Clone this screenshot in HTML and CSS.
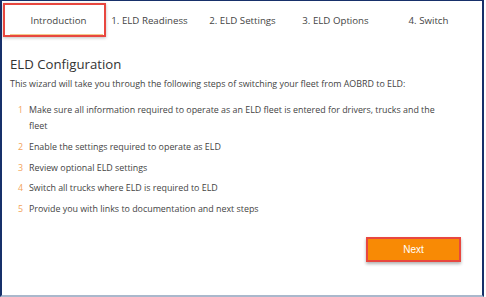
FILE: index.html
```html
<!DOCTYPE html>
<html lang="en">
<head>
    <meta charset="UTF-8">
    <meta name="viewport" content="width=device-width, initial-scale=1.0">
    <title>ELD Configuration</title>
    <link rel="stylesheet" href="styles.css">
</head>
<body>
    <div class="frame">
        <div class="tabs">
            <div class="tab active">Introduction</div>
            <div class="tab">1. ELD Readiness</div>
            <div class="tab">2. ELD Settings</div>
            <div class="tab">3. ELD Options</div>
            <div class="tab">4. Switch</div>
        </div>

        <div class="content">
            <h1>ELD Configuration</h1>
            <p class="intro">This wizard will take you through the following steps of switching your fleet from AOBRD to ELD:</p>

            <ol class="steps">
                <li><span class="num">1</span><span>Make sure all information required to operate as an ELD fleet is entered for drivers, trucks and the fleet</span></li>
                <li><span class="num">2</span><span>Enable the settings required to operate as ELD</span></li>
                <li><span class="num">3</span><span>Review optional ELD settings</span></li>
                <li><span class="num">4</span><span>Switch all trucks where ELD is required to ELD</span></li>
                <li><span class="num">5</span><span>Provide you with links to documentation and next steps</span></li>
            </ol>

            <div class="actions">
                <button class="next">Next</button>
            </div>
        </div>
    </div>
</body>
</html>
```

FILE: styles.css
```css
body {
    margin: 0;
    font-family: "Open Sans", "Noto Sans", sans-serif;
    color: #444;
    background: #fff;
}
.frame {
    width: 484px;
    height: 297px;
    box-sizing: border-box;
    border-left: 2px solid #17306a;
    border-right: 2px solid #17306a;
    border-top: 1px solid #17306a;
    border-bottom: 2px solid #aab8cc;
}
.tabs {
    display: flex;
    padding-left: 8px;
    height: 33px;
    margin-top: 2px;
}
.tab {
    width: 93px;
    font-size: 9.7px;
    line-height: 35px;
    text-align: center;
    color: #444;
    position: relative;
}
.tab.active {
    border-bottom: 2px solid #f3c98a;
    box-sizing: border-box;
    padding-left: 4px;
}
/* red callout round the active tab */
.tab.active::after {
    content: "";
    position: absolute;
    left: -7px;
    right: -3px;
    top: 0;
    bottom: -3px;
    border: 2px solid #e8473f;
    box-shadow: 0 1px 3px rgba(0, 0, 0, 0.25);
}
.content {
    padding: 18px 8px 0 8px;
}
h1 {
    font-size: 13.2px;
    font-weight: normal;
    color: #333;
    margin: 0;
    line-height: 20px;
}
.intro {
    font-size: 8.9px;
    margin: 2px 0 10px 0;
    line-height: 16px;
}
.steps {
    list-style: none;
    margin: 0;
    padding: 0 0 0 8px;
    font-size: 8.9px;
    line-height: 16px;
    width: 430px;
}
.steps li {
    display: flex;
    margin-bottom: 4.75px;
}
.num {
    color: #f2a35a;
    width: 11px;
    flex-shrink: 0;
}
.actions {
    display: flex;
    justify-content: flex-end;
    padding-right: 13px;
    margin-top: 20px;
}
.next {
    width: 95px;
    height: 25px;
    background: #f88a05;
    color: #fff;
    font-family: "Liberation Sans", Arial, sans-serif;
    font-size: 10px;
    border: 2px solid #e8473f;
    box-shadow: 0 2px 3px rgba(0, 0, 0, 0.3);
    cursor: pointer;
}
```
